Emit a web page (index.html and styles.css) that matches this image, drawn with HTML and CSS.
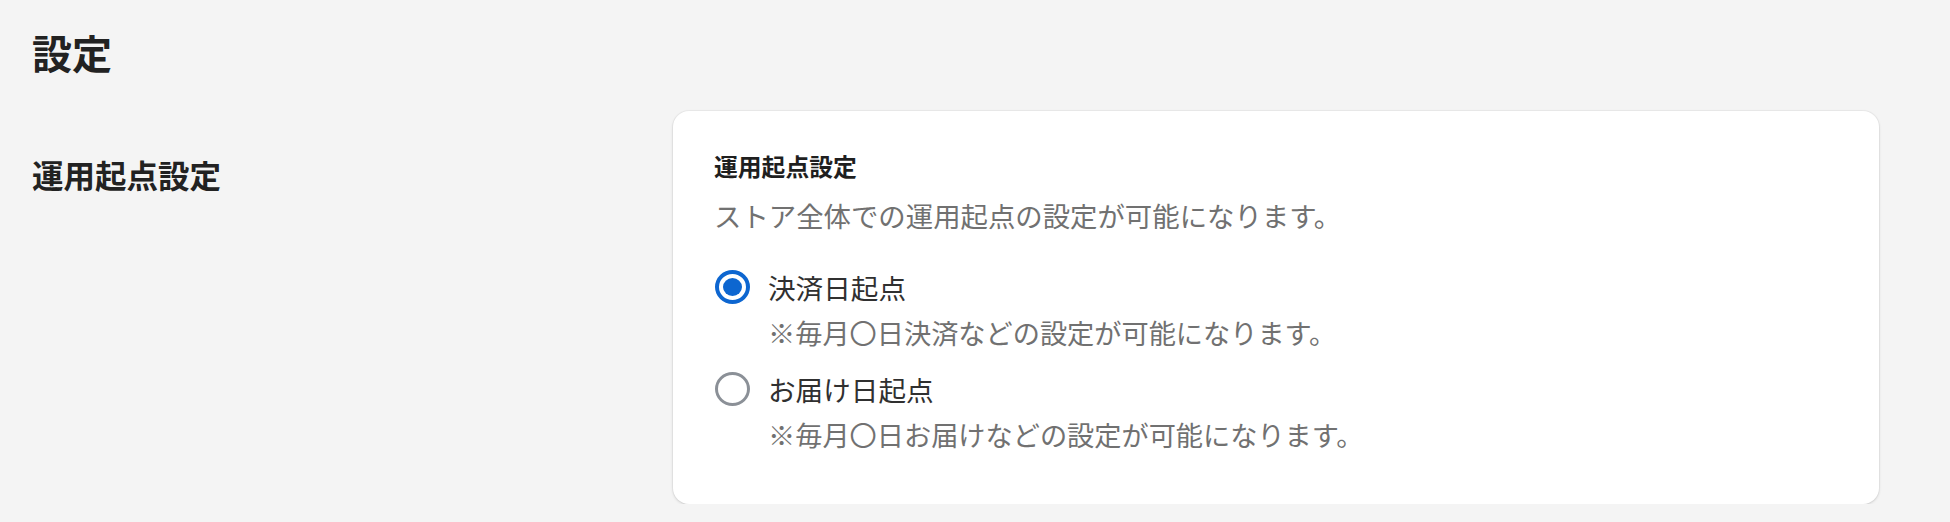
FILE: index.html
```html
<!DOCTYPE html>
<html lang="ja">
<head>
<meta charset="utf-8">
<title>設定</title>
<link rel="stylesheet" href="styles.css">
</head>
<body>
<div class="page">
  <h1 class="page-title">設定</h1>
  <section class="section">
    <div class="annotation">
      <h2 class="annotation-title">運用起点設定</h2>
    </div>
    <div class="card">
      <h3 class="card-title">運用起点設定</h3>
      <p class="card-desc">ストア全体での運用起点の設定が可能になります。</p>
      <div class="choices">
        <label class="choice">
          <span class="choice-row">
            <span class="radio radio-checked"><span class="radio-dot"></span></span>
            <span class="choice-label">決済日起点</span>
          </span>
          <span class="choice-help">※毎月〇日決済などの設定が可能になります。</span>
        </label>
        <label class="choice">
          <span class="choice-row">
            <span class="radio"></span>
            <span class="choice-label">お届け日起点</span>
          </span>
          <span class="choice-help">※毎月〇日お届けなどの設定が可能になります。</span>
        </label>
      </div>
    </div>
  </section>
</div>
</body>
</html>
```

FILE: styles.css
```css
* { box-sizing: border-box; }
html, body {
  margin: 0;
  padding: 0;
  background: #f4f4f4;
}
body {
  font-family: "Noto Sans CJK JP", "Noto Sans", sans-serif;
  color: #1f1f1f;
}
.page {
  padding: 26px 71px 0 32px;
}
.page-title {
  margin: 0;
  font-size: 40px;
  line-height: 52px;
  font-weight: 700;
  color: #222222;
}
.section {
  margin-top: 33px;
  display: grid;
  grid-template-columns: 641px 1fr;
  align-items: start;
}
.annotation-title {
  margin: 41px 0 0 0;
  font-size: 31.5px;
  line-height: 44px;
  font-weight: 700;
  color: #222222;
}
.card {
  background: #ffffff;
  border-radius: 16px;
  box-shadow: 0 1px 3px rgba(0, 0, 0, 0.14), 0 0 0 1px rgba(0, 0, 0, 0.03);
  padding: 39px 40px 50px 41px;
  height: 393px;
}
.card-title {
  margin: 0;
  font-size: 23.8px;
  line-height: 32px;
  font-weight: 700;
  color: #1f1f1f;
}
.card-desc {
  margin: 15px 0 0 0;
  font-size: 27.4px;
  line-height: 36px;
  color: #717171;
}
.choices {
  margin-top: 36px;
  display: flex;
  flex-direction: column;
  gap: 21px;
}
.choice {
  display: flex;
  flex-direction: column;
  gap: 9px;
}
.choice-row {
  display: flex;
  align-items: center;
  gap: 18px;
  height: 36px;
}
.radio {
  width: 35px;
  height: 34px;
  border-radius: 50%;
  border: 3px solid #8b9097;
  display: flex;
  align-items: center;
  justify-content: center;
  flex: none;
  margin-left: 1px;
}
.radio-checked {
  border: 4px solid #0d66d0;
}
.radio-dot {
  width: 19px;
  height: 18px;
  border-radius: 50%;
  background: #0d66d0;
}
.choice-label {
  font-size: 27.6px;
  line-height: 36px;
  color: #303030;
}
.choice-help {
  padding-left: 54px;
  font-size: 27.2px;
  line-height: 36px;
  color: #717171;
}
```
